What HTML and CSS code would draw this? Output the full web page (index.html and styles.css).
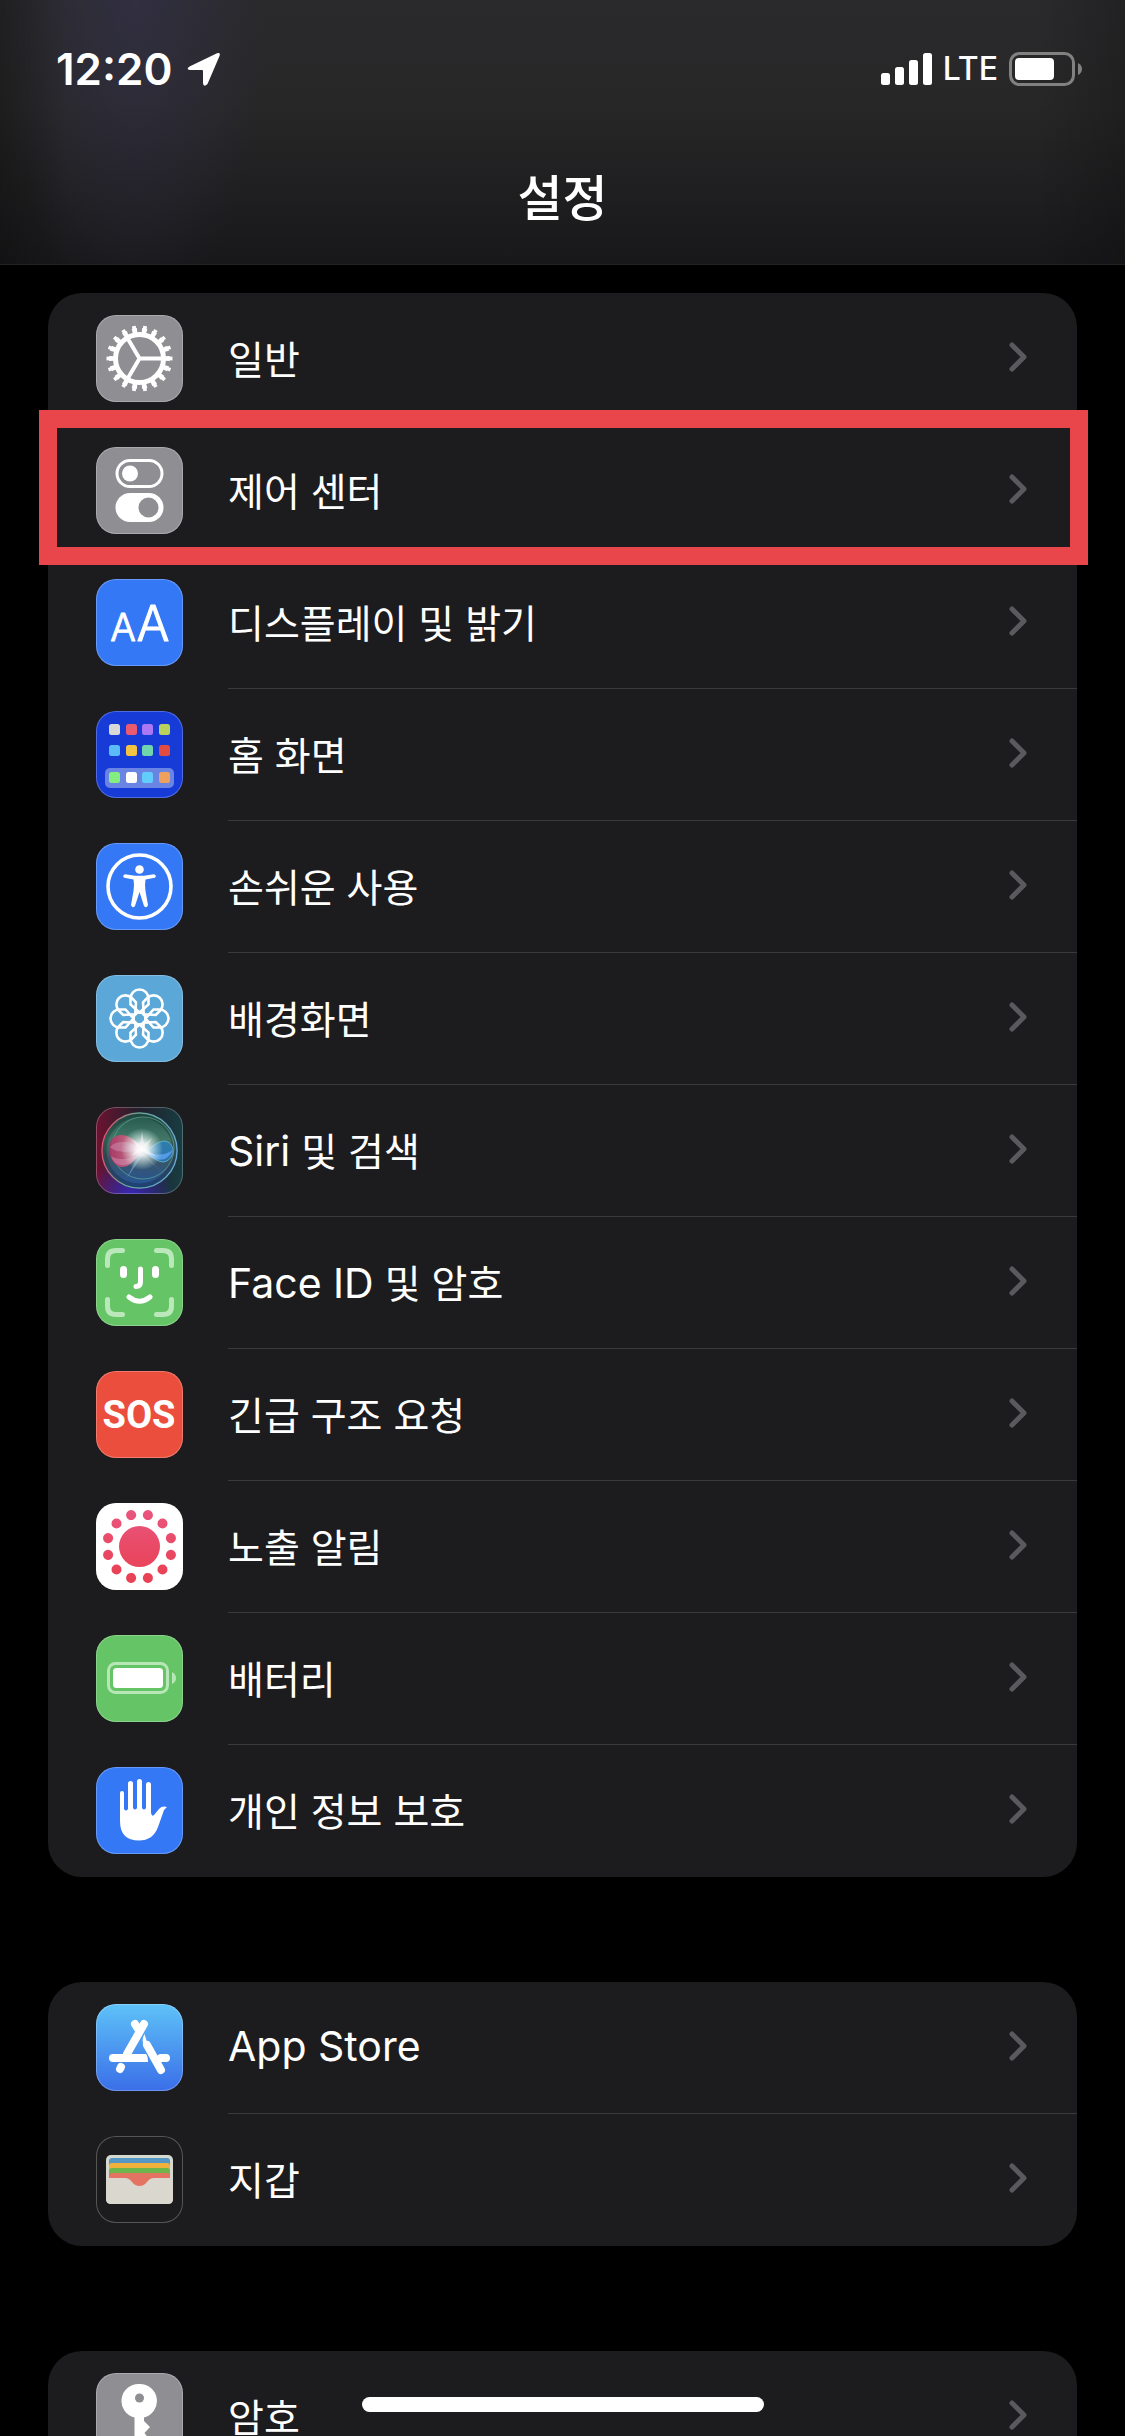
FILE: index.html
```html
<!DOCTYPE html>
<html lang="ko">
<head>
    <meta charset="UTF-8">
    <title>설정</title>
    <meta name="viewport" content="width=device-width,initial-scale=1">
    <link rel="stylesheet" href="styles.css">
</head>
<body>

<svg class="defs" width="0" height="0" aria-hidden="true">
    <defs>
        <symbol id="chevron" viewBox="0 0 18 30">
            <path d="M3 3L15 15L3 27" fill="none" stroke="#5a5a5e" stroke-width="5" stroke-linecap="round" stroke-linejoin="round"/>
        </symbol>
        <path id="petal" d="M0 -6L-9 -14V-20A9 9 0 0 1 9 -20V-14Z"/>
        <linearGradient id="pink" gradientUnits="userSpaceOnUse" x1="0" y1="5" x2="0" y2="70">
            <stop offset="0" stop-color="#e9567f"/>
            <stop offset="1" stop-color="#e94256"/>
        </linearGradient>
        <linearGradient id="siri-bg" x1="0" y1="0" x2="1" y2="0">
            <stop offset="0" stop-color="#6e1230"/>
            <stop offset="0.5" stop-color="#22202c"/>
            <stop offset="1" stop-color="#173d42"/>
        </linearGradient>
        <radialGradient id="siri-low" cx="0.4" cy="1.05" r="0.5">
            <stop offset="0" stop-color="#3a28c0"/>
            <stop offset="1" stop-color="#3a28c0" stop-opacity="0"/>
        </radialGradient>
        <linearGradient id="siri-ball" x1="0" y1="0" x2="0" y2="1">
            <stop offset="0" stop-color="#24564b"/>
            <stop offset="0.35" stop-color="#427768"/>
            <stop offset="0.6" stop-color="#3b5663"/>
            <stop offset="1" stop-color="#24549b"/>
        </linearGradient>
        <linearGradient id="siri-rim" x1="0" y1="0.4" x2="1" y2="0.6">
            <stop offset="0" stop-color="#e0526e"/>
            <stop offset="0.4" stop-color="#67a996"/>
            <stop offset="1" stop-color="#68a9dc"/>
        </linearGradient>
        <linearGradient id="siri-red" x1="0" y1="0" x2="1" y2="0">
            <stop offset="0" stop-color="#b72f62"/>
            <stop offset="1" stop-color="#ef8aa0"/>
        </linearGradient>
        <radialGradient id="siri-glow">
            <stop offset="0" stop-color="#fff"/>
            <stop offset="0.3" stop-color="#fff" stop-opacity="0.85"/>
            <stop offset="1" stop-color="#d5fff5" stop-opacity="0"/>
        </radialGradient>
    </defs>
</svg>

<div class="app">
    <header class="header">
        <div class="status">
            <div class="status-left">
                <span class="time">12:20</span>
                <svg class="location" viewBox="0 0 34 34"><path d="M2.500 14.500L30 1.300Q33.800 0 32.500 4L20.500 32Q16.500 36 16 31V19Q16 18 15 18H3Q-1.500 17.500 2.500 14.500Z" fill="#fff"/></svg>
            </div>
            <div class="status-right">
                <svg class="signal" viewBox="0 0 51 32" fill="#fff">
                    <rect x="0" y="20" width="9" height="12" rx="2.500"/>
                    <rect x="14" y="14" width="9" height="18" rx="2.500"/>
                    <rect x="28" y="7" width="9" height="25" rx="2.500"/>
                    <rect x="42" y="0" width="9" height="32" rx="2.500"/>
                </svg>
                <span class="network">LTE</span>
                <svg class="battery" viewBox="0 0 74 34">
                    <rect x="1.500" y="1.500" width="63" height="31" rx="9" fill="none" stroke="#818182" stroke-width="3"/>
                    <rect x="6" y="6" width="39" height="22" rx="4" fill="#fff"/>
                    <path d="M69 11Q73 13 73 17Q73 21 69 23Z" fill="#818182"/>
                </svg>
            </div>
        </div>
        <h1 class="title">설정</h1>
    </header>

    <main class="content">
        <!-- 기본 설정 -->
        <nav class="group">
            <a class="row" href="#">
                <svg class="tile gray" viewBox="0 0 87 87" fill="none" stroke="#fff">
                    <circle cx="43.500" cy="43.500" r="24" stroke-width="5"/>
                    <circle cx="43.500" cy="43.500" r="28" stroke-width="5" pathLength="180" stroke-dasharray="5 5" stroke-dashoffset="2.500"/>
                    <circle cx="43.500" cy="43.500" r="30.500" stroke-width="5" pathLength="180" stroke-dasharray="3.400 6.600" stroke-dashoffset="1.700"/>
                    <path d="M66 43.500H43.500L32 24M43.500 43.500L32 63" stroke-width="4"/>
                </svg>
                <span class="label">일반<svg class="chevron"><use href="#chevron"/></svg></span>
            </a>
            <a class="row marked" href="#">
                <svg class="tile gray" viewBox="0 0 87 87">
                    <rect x="21" y="13.500" width="45" height="26" rx="13" fill="none" stroke="#fff" stroke-width="3"/>
                    <circle cx="34" cy="26.500" r="8" fill="#fff"/>
                    <rect x="19.500" y="46" width="48" height="29" rx="14.500" fill="#fff"/>
                    <circle cx="52.500" cy="60.500" r="10" fill="#8e8e93"/>
                </svg>
                <span class="label">제어 센터<svg class="chevron"><use href="#chevron"/></svg></span>
            </a>
            <a class="row" href="#">
                <svg class="tile blue" viewBox="0 0 87 87">
                    <text class="glyph-a" x="27" y="62" font-size="38">A</text>
                    <text class="glyph-a" x="57" y="62" font-size="49">A</text>
                </svg>
                <span class="label">디스플레이 및 밝기<svg class="chevron"><use href="#chevron"/></svg></span>
            </a>
            <a class="row" href="#">
                <svg class="tile navy" viewBox="0 0 87 87">
                    <rect x="9" y="57" width="69" height="20" rx="5" fill="#6a84e3"/>
                    <rect x="13" y="13" width="11" height="11" rx="2.500" fill="#d8d8d6"/>
                    <rect x="30" y="13" width="11" height="11" rx="2.500" fill="#ea5a70"/>
                    <rect x="46" y="13" width="11" height="11" rx="2.500" fill="#aa78f5"/>
                    <rect x="63" y="13" width="11" height="11" rx="2.500" fill="#b8d25c"/>
                    <rect x="13" y="34" width="11" height="11" rx="2.500" fill="#5bbaf8"/>
                    <rect x="30" y="34" width="11" height="11" rx="2.500" fill="#f5c344"/>
                    <rect x="46" y="34" width="11" height="11" rx="2.500" fill="#70d6ae"/>
                    <rect x="63" y="34" width="11" height="11" rx="2.500" fill="#e24b3f"/>
                    <rect x="13" y="61" width="11" height="11" rx="2.500" fill="#84ed80"/>
                    <rect x="30" y="61" width="11" height="11" rx="2.500" fill="#fff"/>
                    <rect x="46" y="61" width="11" height="11" rx="2.500" fill="#62ccfa"/>
                    <rect x="63" y="61" width="11" height="11" rx="2.500" fill="#eea15c"/>
                </svg>
                <span class="label">홈 화면<svg class="chevron"><use href="#chevron"/></svg></span>
            </a>
            <a class="row" href="#">
                <svg class="tile blue" viewBox="0 0 87 87">
                    <circle cx="43.500" cy="43.500" r="31.500" fill="none" stroke="#fff" stroke-width="3.600"/>
                    <circle cx="43.500" cy="26.500" r="4.300" fill="#fff"/>
                    <path d="M29 31.300L39 32.800H48L58 31.300Q61 32.500 59 34.800L49.500 36.500Q48.500 42 49.500 48L52 62Q50.500 66 48 63L43.500 49L39 63Q36.500 66 35 62L37.500 48Q38.500 42 37.500 36.500L28 34.800Q26 32.500 29 31.300Z" fill="#fff"/>
                </svg>
                <span class="label">손쉬운 사용<svg class="chevron"><use href="#chevron"/></svg></span>
            </a>
            <a class="row" href="#">
                <svg class="tile sky" viewBox="0 0 87 87">
                    <g transform="translate(43.500 43.500)" fill="none" stroke="#fff" stroke-width="2.600">
                        <use href="#petal"/>
                        <use href="#petal" transform="rotate(45)"/>
                        <use href="#petal" transform="rotate(90)"/>
                        <use href="#petal" transform="rotate(135)"/>
                        <use href="#petal" transform="rotate(180)"/>
                        <use href="#petal" transform="rotate(225)"/>
                        <use href="#petal" transform="rotate(270)"/>
                        <use href="#petal" transform="rotate(315)"/>
                        <circle r="6"/>
                    </g>
                </svg>
                <span class="label">배경화면<svg class="chevron"><use href="#chevron"/></svg></span>
            </a>
            <a class="row" href="#">
                <svg class="tile siri" viewBox="0 0 87 87">
                    <rect width="87" height="87" fill="url(#siri-bg)"/>
                    <rect width="87" height="87" fill="url(#siri-low)"/>
                    <rect x="0.500" y="0.500" width="86" height="86" rx="19.500" fill="none" stroke="#fff" stroke-opacity="0.25"/>
                    <circle cx="43.500" cy="43.500" r="37.500" fill="url(#siri-ball)" stroke="url(#siri-rim)" stroke-width="1.500"/>
                    <circle cx="43.500" cy="43.500" r="35" fill="none" stroke="#101c24" stroke-opacity="0.3" stroke-width="4"/>
                    <circle cx="47" cy="41" r="31" fill="none" stroke="#65b99b" stroke-opacity="0.6"/>
                    <path d="M47 43C38 30 26 24 17 31C9 39 14 58 25 60C35 61 41 49 47 43Z" fill="url(#siri-red)" opacity="0.85"/>
                    <path d="M47 43C35 33 20 33 14 40C22 48 36 44 47 43ZM47 43C38 52 24 55 15 49C18 61 36 63 47 43Z" fill="#d7a4c4" opacity="0.4"/>
                    <path d="M47 43C55 43 59 35 68 34C80 35 80 52 68 55C60 55 54 48 47 43Z" fill="#2b7fbf" stroke="#62bde0" opacity="0.8"/>
                    <path d="M47 43C58 49 68 49 77 43C70 57 57 55 47 43Z" fill="#67aaff" opacity="0.7"/>
                    <path d="M44 44L31 71L47 48L67 66Z" fill="#8fb9e8" opacity="0.45"/>
                    <circle cx="46" cy="42" r="21" fill="url(#siri-glow)"/>
                    <path d="M46 24L48 37L56 31L50 42L60 49L46 45L35 49L42 41L36 32L44 37Z" fill="#fff" opacity="0.4"/>
                </svg>
                <span class="label"><span><span class="latin">Siri</span> 및 검색</span><svg class="chevron"><use href="#chevron"/></svg></span>
            </a>
            <a class="row" href="#">
                <svg class="tile green" viewBox="0 0 87 87" fill="none" stroke="#fff" stroke-width="5" stroke-linecap="round">
                    <path d="M11.500 26.500V20Q11.500 11.500 20 11.500H26.500M60.500 11.500H67Q75.500 11.500 75.500 20V26.500M75.500 60.500V67Q75.500 75.500 67 75.500H60.500M26.500 75.500H20Q11.500 75.500 11.500 67V60.500" stroke="#bbe8bb"/>
                    <path d="M27.500 30.500V35.500M59.500 30.500V35.500" stroke-width="7"/>
                    <path d="M44.500 30V43Q44.500 47.500 40 47.500M33 58Q43.500 66.500 54 58"/>
                </svg>
                <span class="label"><span><span class="latin">Face ID</span> 및 암호</span><svg class="chevron"><use href="#chevron"/></svg></span>
            </a>
            <a class="row" href="#">
                <svg class="tile red" viewBox="0 0 87 87">
                    <text class="glyph-sos" x="43" y="57" font-size="38">SOS</text>
                </svg>
                <span class="label">긴급 구조 요청<svg class="chevron"><use href="#chevron"/></svg></span>
            </a>
            <a class="row" href="#">
                <svg class="tile white" viewBox="0 0 87 87">
                    <circle cx="43.500" cy="43.500" r="20.500" fill="url(#pink)"/>
                    <circle cx="43.500" cy="43.500" r="32.500" fill="none" stroke="url(#pink)" stroke-width="10" stroke-linecap="round" pathLength="120" stroke-dasharray="0.010 9.990" stroke-dashoffset="-5"/>
                </svg>
                <span class="label">노출 알림<svg class="chevron"><use href="#chevron"/></svg></span>
            </a>
            <a class="row" href="#">
                <svg class="tile green" viewBox="0 0 87 87">
                    <rect x="12.500" y="28.500" width="59" height="29" rx="7" fill="none" stroke="#b7e7b7" stroke-width="3"/>
                    <rect x="17" y="33" width="50" height="20" rx="3.500" fill="#fff"/>
                    <path d="M76 37Q80 39 80 43Q80 47 76 49Z" fill="#b7e7b7"/>
                </svg>
                <span class="label">배터리<svg class="chevron"><use href="#chevron"/></svg></span>
            </a>
            <a class="row" href="#">
                <svg class="tile blue" viewBox="0 0 87 87" fill="#fff">
                    <path d="M24 26Q24 24 26 24Q28 24 28 26V42Q30 45 32 42V16.500Q32 14 34.500 14Q37 14 37 16.500V41Q39 44 41 41V14.500Q41 12 43.500 12Q46 12 46 14.500V41Q48 44 50 41V17.500Q50 15 52.500 15Q55 15 55 17.500V46Q56 50 58 48L63 42Q66 38.500 71 40Q68 42 67 46L62 60Q57 73.500 43 73.500Q24 73.500 24 54Z"/>
                </svg>
                <span class="label">개인 정보 보호<svg class="chevron"><use href="#chevron"/></svg></span>
            </a>
        </nav>

        <!-- 스토어, 지갑 -->
        <nav class="group">
            <a class="row" href="#">
                <svg class="tile store" viewBox="0 0 87 87" fill="none" stroke="#fff" stroke-width="8" stroke-linecap="round">
                    <path d="M39 20L42 25M48 20L31 50M17 54H47M65 54H70M24 65L25 63"/>
                    <path d="M26 50H50Q52 52 52 58H24ZM21.500 61Q24 58 28.500 61L26 66ZM48.500 30Q45 36 48 42L52 41Z" fill="#fff" stroke="none"/>
                    <path d="M51 41L65 66"/>
                </svg>
                <span class="label"><span class="latin">App Store</span><svg class="chevron"><use href="#chevron"/></svg></span>
            </a>
            <a class="row" href="#">
                <svg class="tile" viewBox="0 0 87 87">
                    <rect x="10" y="19" width="67" height="49" rx="5" fill="#d5d9cf"/>
                    <path d="M13 42V25Q13 22 16 22H71Q74 22 74 25V42Z" fill="#5696c4"/>
                    <path d="M13 42V30Q13 27 16 27H71Q74 27 74 30V42Z" fill="#f1b13d"/>
                    <path d="M13 42V35Q13 32 16 32H71Q74 32 74 35V42Z" fill="#6fb54c"/>
                    <path d="M13 52V40Q13 37 16 37H71Q74 37 74 40V52Z" fill="#e57362"/>
                    <path d="M10 42H29Q33 42 36 46T43.500 50Q48 50 51 46T58 42H77V63Q77 68 72 68H15Q10 68 10 63Z" fill="#d9d7ce"/>
                </svg>
                <span class="label">지갑<svg class="chevron"><use href="#chevron"/></svg></span>
            </a>
        </nav>

        <!-- 암호 -->
        <nav class="group">
            <a class="row" href="#">
                <svg class="tile gray" viewBox="0 0 87 87">
                    <path d="M43.500 11A17 17 0 0 1 48 44.500V48L54 54L48.500 60L53 66L48.500 72V74L43.500 79L38.500 74V44.500A17 17 0 0 1 43.500 11Z" fill="#fff"/>
                    <circle cx="43.500" cy="25" r="4.500" fill="#8e8e93"/>
                </svg>
                <span class="label">암호<svg class="chevron"><use href="#chevron"/></svg></span>
            </a>
        </nav>
    </main>

    <div class="home-bar"></div>
</div>

</body>
</html>
```

FILE: styles.css
```css
body{
    margin: 0;
    background: #000;
    color: #fff;
    font-family: Inter, "Noto Sans CJK KR", sans-serif;
}
.defs{
    position: absolute;
}
.app{
    height: 100vh;
    overflow: hidden;
}

.header{
    box-sizing: border-box;
    height: 265px;
    border-bottom: 1px solid #222223;
    background:
        linear-gradient(90deg, rgba(0,0,0,0.25), transparent 6%, transparent 92%, rgba(0,0,0,0.2)),
        radial-gradient(ellipse 130px 320px at 12% 0, rgba(56,52,84,0.5), transparent),
        linear-gradient(#2a2a2c, #272728 40%, #18181a);
}
.status{
    display: flex;
    justify-content: space-between;
    align-items: center;
    height: 138px;
    padding: 0 42px 0 56px;
}
.status-left,
.status-right{
    display: flex;
    align-items: center;
}
.status-left{
    gap: 14px;
}
.status-right{
    gap: 11px;
}
.time{
    font-size: 44px;
    font-weight: 600;
}
.location{
    width: 34px;
    height: 34px;
}
.signal{
    width: 51px;
    height: 32px;
}
.network{
    font-size: 32px;
    font-weight: 500;
    line-height: 40px;
}
.battery{
    width: 74px;
    height: 34px;
}
.title{
    margin: 0;
    font-size: 49px;
    font-weight: 500;
    line-height: 122px;
    text-align: center;
}

.content{
    display: flex;
    flex-direction: column;
    gap: 105px;
    padding: 28px 48px;
}
.group{
    background: #1c1c1e;
    border-radius: 34px;
}
.row{
    display: flex;
    align-items: flex-start;
    gap: 45px;
    height: 132px;
    padding-left: 48px;
    color: #fff;
    text-decoration: none;
    position: relative;
}
.tile{
    flex: none;
    width: 87px;
    height: 87px;
    margin-top: 22px;
    border-radius: 20px;
    box-shadow: inset 0 0 0 1px rgba(255,255,255,0.25);
}
.label{
    flex: 1;
    box-sizing: border-box;
    display: flex;
    align-items: center;
    height: 132px;
    padding: 0 50px 3px 0;
    border-bottom: 1px solid #3a3a3c;
    font-size: 39px;
    white-space: nowrap;
}
.row:last-child .label{
    border-bottom-color: transparent;
}
.latin{
    font-size: 41px;
}
.chevron{
    width: 18px;
    height: 30px;
    margin-left: auto;
}

.marked::after{
    content: "";
    position: absolute;
    z-index: 1;
    top: -15px;
    right: -11px;
    bottom: -8px;
    left: -9px;
    border: 18px solid #e8464a;
}

.gray{
    background: #8e8e93;
}
.blue{
    background: #3478f6;
}
.navy{
    background: #163bd6;
}
.sky{
    background: #5aa7d8;
}
.green{
    background: #65c466;
}
.red{
    background: #eb4e3d;
}
.white{
    background: #fff;
}
.store{
    background: linear-gradient(#5ec2f8, #3a6ee8);
}
.glyph-a{
    fill: #fff;
    stroke: #fff;
    stroke-width: 1px;
    stroke-linejoin: round;
    font-weight: 300;
    text-anchor: middle;
}
.glyph-sos{
    fill: #fff;
    font-family: Roboto, sans-serif;
    font-weight: 700;
    text-anchor: middle;
}

.home-bar{
    position: fixed;
    bottom: 24px;
    left: 50%;
    width: 402px;
    height: 15px;
    margin-left: -201px;
    border-radius: 8px;
    background: #fff;
}
```
